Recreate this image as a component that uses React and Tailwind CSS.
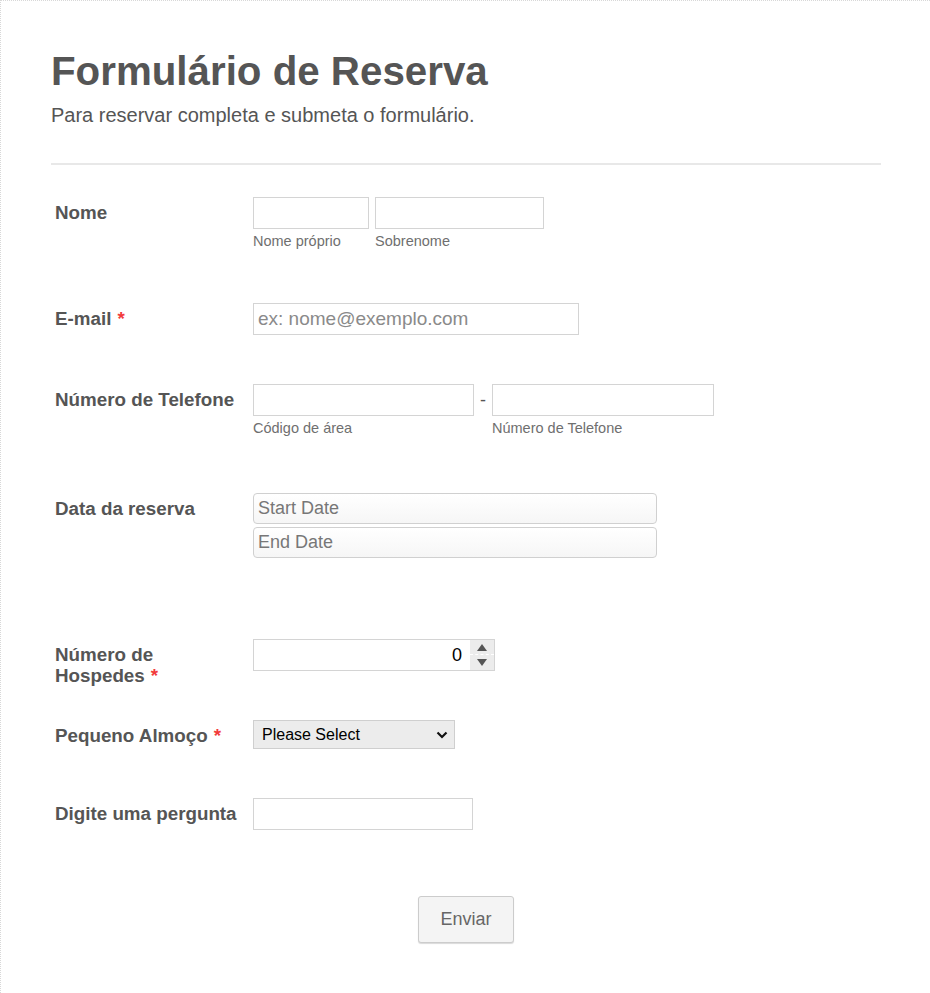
import React from "react";

const font = { fontFamily: '"Liberation Sans", Arial, Helvetica, sans-serif' };

function Label({ children, req }) {
  return (
    <div className="w-[202px] shrink-0 pl-[4px] pt-[5px] pr-2 text-[18.8px] leading-[21px] font-bold text-[#555]">
      {children}
      {req && <span className="text-[#f23a3c] ml-[6px]">*</span>}
    </div>
  );
}

const inputCls =
  "h-[32px] border border-[#d4d4d4] bg-white px-[4px] text-[18px] text-[#333] outline-none placeholder:text-[#8a8a8a]";

function Sub({ children }) {
  return <div className="mt-[3px] text-[14.5px] leading-[18px] text-[#6f6f6f]">{children}</div>;
}

export default function App() {
  return (
    <div style={font} className="min-h-[993px] w-[930px] bg-white border-l border-t border-dotted border-[#d8d8d8]">
      <div className="pl-[50px] pr-[49px] pt-[51px]">
        <h1 className="text-[40.3px] leading-none font-bold text-[#555]">Formulário de Reserva</h1>
        <p className="mt-[13px] text-[20px] leading-none text-[#555]">
          Para reservar completa e submeta o formulário.
        </p>
        <div className="mt-[38px] h-[2px] bg-[#e8e8e8]" />

        {/* Nome */}
        <div className="mt-[32px] flex">
          <Label>Nome</Label>
          <div className="flex gap-[6px]">
            <div className="flex flex-col">
              <input className={`${inputCls} w-[116px]`} />
              <Sub>Nome próprio</Sub>
            </div>
            <div className="flex flex-col">
              <input className={`${inputCls} w-[169px]`} />
              <Sub>Sobrenome</Sub>
            </div>
          </div>
        </div>

        {/* Email */}
        <div className="mt-[53px] flex">
          <Label req>E-mail</Label>
          <input className={`${inputCls} w-[326px] text-[19px]`} placeholder="ex: nome@exemplo.com" />
        </div>

        {/* Telefone */}
        <div className="mt-[49px] flex">
          <Label>Número de Telefone</Label>
          <div className="flex">
            <div className="flex flex-col">
              <input className={`${inputCls} w-[221px]`} />
              <Sub>Código de área</Sub>
            </div>
            <div className="w-[18px] pt-[5px] text-center text-[18px] leading-[22px] text-[#555]">-</div>
            <div className="flex flex-col">
              <input className={`${inputCls} w-[222px]`} />
              <Sub>Número de Telefone</Sub>
            </div>
          </div>
        </div>

        {/* Data */}
        <div className="mt-[56px] flex">
          <Label>Data da reserva</Label>
          <div className="flex flex-col gap-[3px]">
            <input
              className="h-[31px] w-[404px] rounded-[4px] border border-[#d0d0d0] bg-gradient-to-b from-white to-[#f6f6f6] px-[4px] text-[18px] outline-none placeholder:text-[#777]"
              placeholder="Start Date"
            />
            <input
              className="h-[31px] w-[404px] rounded-[4px] border border-[#d0d0d0] bg-gradient-to-b from-white to-[#f6f6f6] px-[4px] text-[18px] outline-none placeholder:text-[#777]"
              placeholder="End Date"
            />
          </div>
        </div>

        {/* Hospedes */}
        <div className="mt-[81px] flex">
          <Label req>
            Número de
            <br />
            Hospedes
          </Label>
          <div className="flex h-[32px] w-[242px] border border-[#d4d4d4] bg-white">
            <div className="flex flex-1 items-center justify-end pr-[8px] text-[18px] text-black">0</div>
            <div className="flex w-[24px] flex-col items-center justify-center bg-[#ececec]">
              <div className="flex h-[15px] w-full items-center justify-center border-b border-dashed border-[#fff]">
                <svg width="10" height="7" viewBox="0 0 10 7">
                  <path d="M5 0 L10 7 L0 7 Z" fill="#555" />
                </svg>
              </div>
              <div className="flex h-[15px] w-full items-center justify-center">
                <svg width="10" height="7" viewBox="0 0 10 7">
                  <path d="M0 0 L10 0 L5 7 Z" fill="#555" />
                </svg>
              </div>
            </div>
          </div>
        </div>

        {/* Pequeno Almoço */}
        <div className="mt-[34px] flex">
          <Label req>Pequeno Almoço</Label>
          <div className="flex h-[29px] w-[202px] items-center justify-between border border-[#cfcfcf] bg-[#ececec] pl-[8px] pr-[6px]">
            <span className="text-[16px] text-black">Please Select</span>
            <svg width="12" height="8" viewBox="0 0 12 8">
              <path d="M1.5 1.5 L6 6 L10.5 1.5" fill="none" stroke="#111" strokeWidth="2.2" />
            </svg>
          </div>
        </div>

        {/* Digite */}
        <div className="mt-[49px] flex">
          <Label>Digite uma pergunta</Label>
          <input className={`${inputCls} w-[220px]`} />
        </div>

        {/* Button */}
        <div className="mt-[66px] flex justify-center">
          <button className="h-[47px] w-[96px] rounded-[3px] border border-[#cccccc] bg-[#f4f4f4] text-[18px] text-[#666] shadow-[0_1px_1px_rgba(0,0,0,0.15)]">
            Enviar
          </button>
        </div>
      </div>
    </div>
  );
}
